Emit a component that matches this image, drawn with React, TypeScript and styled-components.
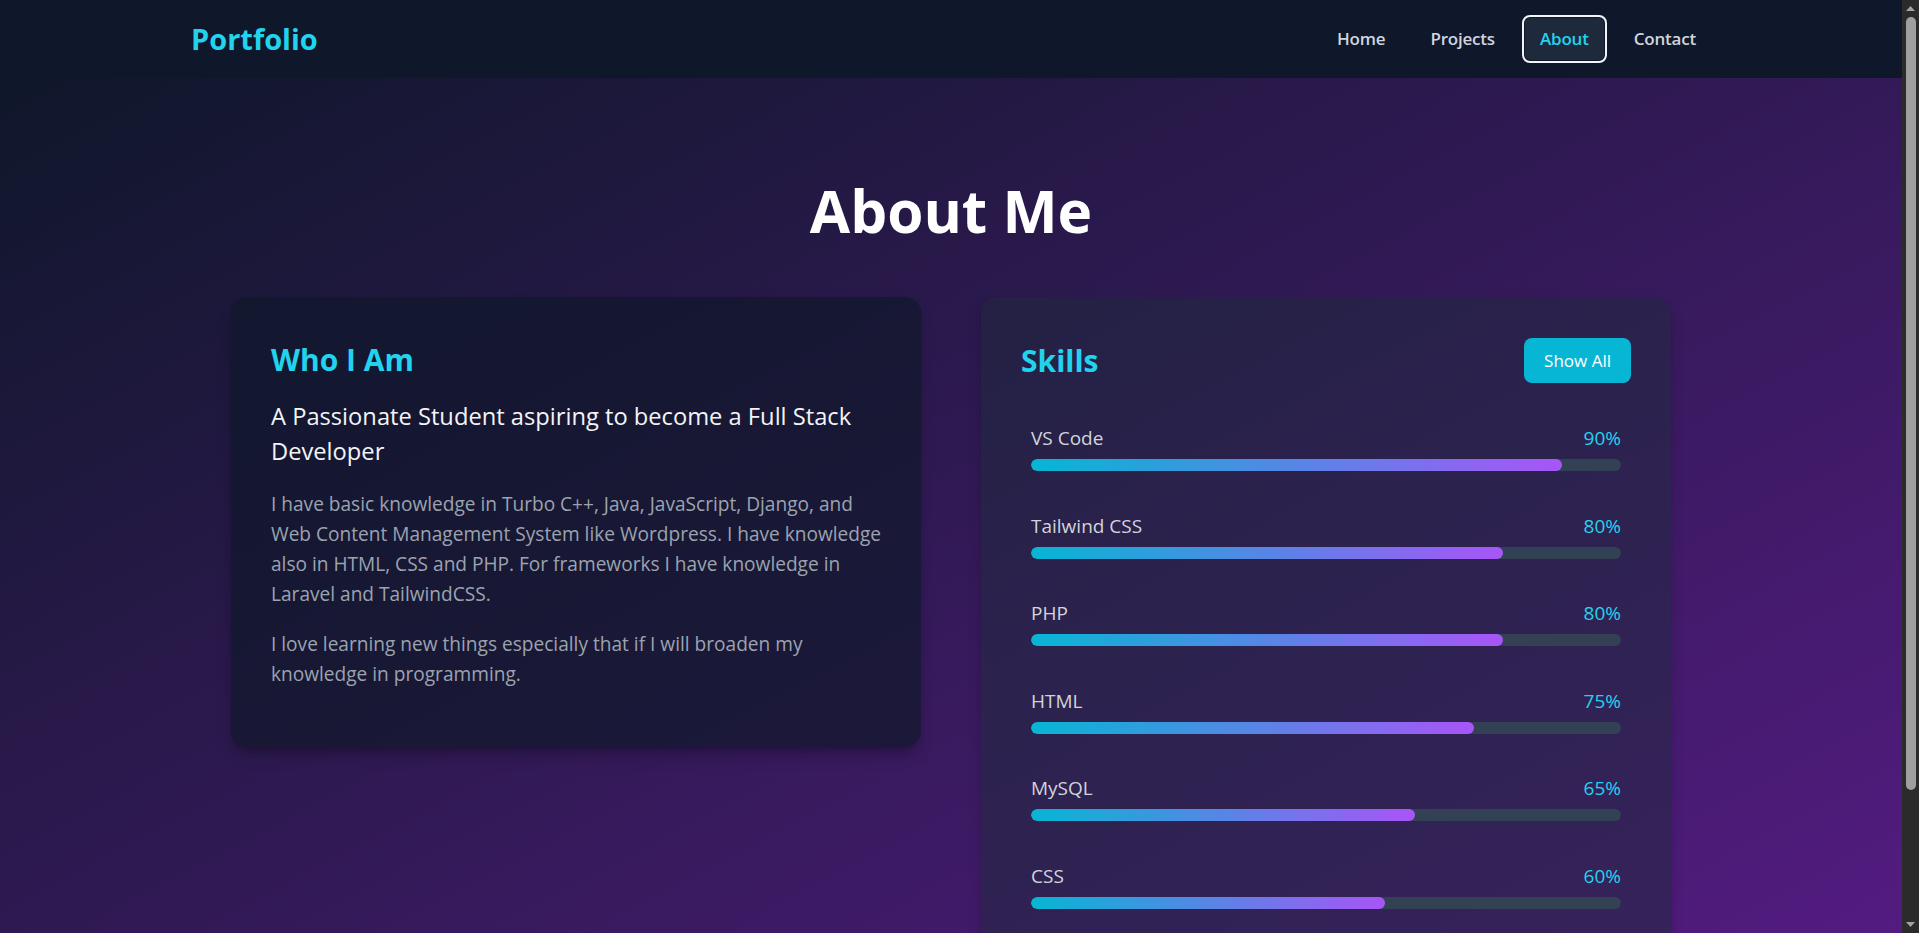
import React from 'react';
import styled, { createGlobalStyle } from 'styled-components';

const GlobalStyle = createGlobalStyle`
  html { color-scheme: dark; }
  * { box-sizing: border-box; }
  body {
    margin: 0;
    font-family: "Open Sans", "Noto Sans", sans-serif;
    background: #0f172a;
    -webkit-font-smoothing: antialiased;
    overflow: hidden;
  }
  h1, h2, h3, p { margin: 0; }
`;

const Viewport = styled.div`
  height: 100vh;
  display: flex;
`;

const ScrollArea = styled.div`
  flex: 1;
  min-width: 0;
  overflow: hidden;
`;

const ScrollRail = styled.div`
  width: 17px;
  flex: none;
  background: #2b2b2b;
  display: flex;
  flex-direction: column;
  align-items: center;
`;

const ScrollArrow = styled.svg`
  width: 17px;
  height: 17px;
  flex: none;
`;

const ScrollThumb = styled.div`
  width: 10px;
  height: 773px;
  margin: 0 0 0 1px;
  border-radius: 5px;
  background: #9f9f9f;
`;

const ScrollSpacer = styled.div`
  flex: 1;
`;

const Nav = styled.nav`
  height: 78px;
  background: #0f172a;
`;

const NavInner = styled.div`
  max-width: 1520px;
  height: 100%;
  margin: 0 auto;
  display: flex;
  align-items: center;
  justify-content: space-between;
`;

const Logo = styled.a`
  font-size: 29px;
  line-height: 36px;
  font-weight: 700;
  color: #22d3ee;
  text-decoration: none;
`;

const NavLinks = styled.div`
  display: flex;
  align-items: center;
  gap: 9px;
  margin-right: -3px;
`;

const NavLink = styled.a<{ $active?: boolean }>`
  display: block;
  padding: 8px 16px;
  border-radius: 8px;
  font-size: 17px;
  line-height: 28px;
  font-weight: 600;
  letter-spacing: -0.2px;
  text-decoration: none;
  color: ${(p) => (p.$active ? '#22d3ee' : '#d1d5db')};
  background: ${(p) => (p.$active ? '#1e293b' : 'transparent')};
  border: 2px solid ${(p) => (p.$active ? '#f1f5f9' : 'transparent')};
  box-shadow: ${(p) => (p.$active ? 'inset 0 0 0 1px #0f172a' : 'none')};
`;

const Main = styled.main`
  min-height: calc(100vh - 78px);
  background: linear-gradient(to bottom right, #0f172a 0%, #581c87 100%);
  padding: 102px 0 128px;
`;

const Title = styled.h1`
  font-size: 58.5px;
  line-height: 60px;
  font-weight: 700;
  color: #ffffff;
  text-align: center;
  margin-bottom: 57px;
`;

const Grid = styled.div`
  max-width: 1440px;
  margin: 0 auto;
  display: grid;
  grid-template-columns: minmax(0, 1fr) minmax(0, 1fr);
  gap: 60px;
  align-items: start;
`;

const Card = styled.section<{ $tone: 'dark' | 'light' }>`
  border-radius: 16px;
  background: ${(p) =>
    p.$tone === 'dark' ? 'rgba(15, 23, 42, 0.68)' : 'rgba(30, 41, 59, 0.5)'};
  box-shadow: 0 10px 15px -3px rgba(0, 0, 0, 0.25), 0 4px 6px -4px rgba(0, 0, 0, 0.2);
  padding: ${(p) => (p.$tone === 'dark' ? '45px 40px 38px' : '41px 40px 40px')};
`;

const CardTitle = styled.h2<{ $mb?: number }>`
  font-size: 30px;
  line-height: 36px;
  font-weight: 700;
  color: #22d3ee;
  margin-bottom: ${(p) => (p.$mb ?? 0)}px;
`;

const Subtitle = styled.h3`
  font-size: 23.7px;
  line-height: 35px;
  font-weight: 400;
  color: #f3f4f6;
  margin-bottom: 20px;
`;

const Paragraph = styled.p`
  font-size: 19.1px;
  line-height: 30px;
  color: #9ca3af;
  margin-bottom: 20px;
  white-space: nowrap;
`;

const SkillsHeader = styled.div`
  display: flex;
  align-items: center;
  justify-content: space-between;
  margin-bottom: 41px;
`;

const ShowAllButton = styled.button`
  height: 45px;
  padding: 0 20px;
  border: none;
  border-radius: 8px;
  background: #06b6d4;
  color: #ffffff;
  font-family: inherit;
  font-size: 17px;
  line-height: 28px;
  cursor: pointer;
`;

const SkillList = styled.div`
  display: flex;
  flex-direction: column;
  gap: 40.6px;
  padding: 0 10px;
`;

const SkillItem = styled.div`
  display: flex;
  flex-direction: column;
  gap: 7px;
`;

const SkillRow = styled.div`
  display: flex;
  justify-content: space-between;
  font-size: 19px;
  line-height: 28px;
`;

const SkillName = styled.span`
  color: #d1d5db;
`;

const SkillPercent = styled.span`
  color: #22d3ee;
`;

const Track = styled.div`
  height: 12px;
  border-radius: 9999px;
  background: #334155;
  overflow: hidden;
`;

const Fill = styled.div`
  height: 100%;
  border-radius: 9999px;
  background: linear-gradient(to right, #06b6d4, #a855f7);
`;

const skills = [
  { name: 'VS Code', level: 90 },
  { name: 'Tailwind CSS', level: 80 },
  { name: 'PHP', level: 80 },
  { name: 'HTML', level: 75 },
  { name: 'MySQL', level: 65 },
  { name: 'CSS', level: 60 },
];

export default function App() {
  return (
    <>
      <GlobalStyle />
      <Viewport>
        <ScrollArea>
          <Nav>
            <NavInner>
              <Logo href="#">Portfolio</Logo>
              <NavLinks>
                <NavLink href="#">Home</NavLink>
                <NavLink href="#">Projects</NavLink>
                <NavLink href="#" $active>
                  About
                </NavLink>
                <NavLink href="#">Contact</NavLink>
              </NavLinks>
            </NavInner>
          </Nav>
          <Main>
            <Title>About Me</Title>
            <Grid>
              <Card $tone="dark">
                <CardTitle $mb={21}>Who I Am</CardTitle>
                <Subtitle>A Passionate Student aspiring to become a Full Stack Developer</Subtitle>
                <Paragraph>
                  I have basic knowledge in Turbo C++, Java, JavaScript, Django, and
                  <br />
                  Web Content Management System like Wordpress. I have knowledge
                  <br />
                  also in HTML, CSS and PHP. For frameworks I have knowledge in
                  <br />
                  Laravel and TailwindCSS.
                </Paragraph>
                <Paragraph>
                  I love learning new things especially that if I will broaden my
                  <br />
                  knowledge in programming.
                </Paragraph>
              </Card>
              <Card $tone="light">
                <SkillsHeader>
                  <CardTitle>Skills</CardTitle>
                  <ShowAllButton>Show All</ShowAllButton>
                </SkillsHeader>
                <SkillList>
                  {skills.map((s) => (
                    <SkillItem key={s.name}>
                      <SkillRow>
                        <SkillName>{s.name}</SkillName>
                        <SkillPercent>{s.level}%</SkillPercent>
                      </SkillRow>
                      <Track>
                        <Fill style={{ width: `${s.level}%` }} />
                      </Track>
                    </SkillItem>
                  ))}
                </SkillList>
              </Card>
            </Grid>
          </Main>
        </ScrollArea>
        <ScrollRail aria-hidden="true">
          <ScrollArrow viewBox="0 0 17 17">
            <path d="M4 11 L8.5 6 L13 11 Z" fill="#a3a3a3" />
          </ScrollArrow>
          <ScrollThumb />
          <ScrollSpacer />
          <ScrollArrow viewBox="0 0 17 17">
            <path d="M4 6 L8.5 11 L13 6 Z" fill="#a3a3a3" />
          </ScrollArrow>
        </ScrollRail>
      </Viewport>
    </>
  );
}
